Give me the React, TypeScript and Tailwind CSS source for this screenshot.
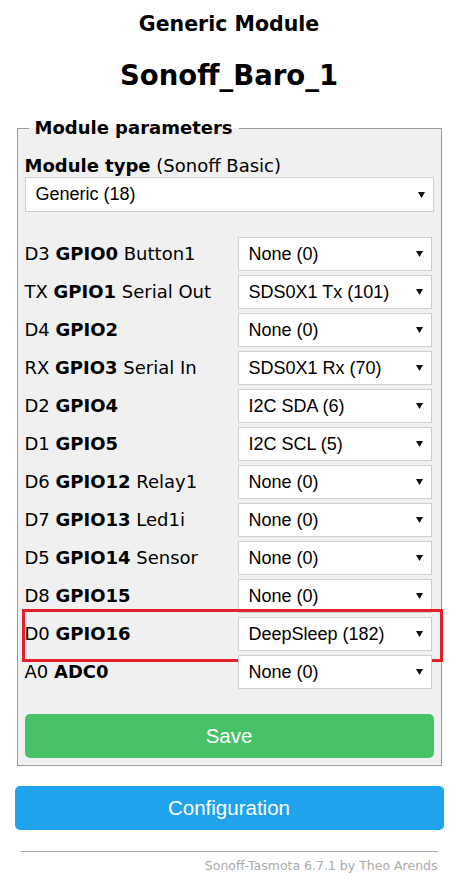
import React from 'react'

// --- GPIO rows as shown on the Tasmota module page ---
const rows = [
  { pin: 'D3', gpio: 'GPIO0', note: 'Button1', value: 'None (0)' },
  { pin: 'TX', gpio: 'GPIO1', note: 'Serial Out', value: 'SDS0X1 Tx (101)' },
  { pin: 'D4', gpio: 'GPIO2', note: '', value: 'None (0)' },
  { pin: 'RX', gpio: 'GPIO3', note: 'Serial In', value: 'SDS0X1 Rx (70)' },
  { pin: 'D2', gpio: 'GPIO4', note: '', value: 'I2C SDA (6)' },
  { pin: 'D1', gpio: 'GPIO5', note: '', value: 'I2C SCL (5)' },
  { pin: 'D6', gpio: 'GPIO12', note: 'Relay1', value: 'None (0)' },
  { pin: 'D7', gpio: 'GPIO13', note: 'Led1i', value: 'None (0)' },
  { pin: 'D5', gpio: 'GPIO14', note: 'Sensor', value: 'None (0)' },
  { pin: 'D8', gpio: 'GPIO15', note: '', value: 'None (0)' },
  { pin: 'D0', gpio: 'GPIO16', note: '', value: 'DeepSleep (182)', marked: true },
  { pin: 'A0', gpio: 'ADC0', note: '', value: 'None (0)' },
]

function Caret() {
  return (
    <svg width="7" height="6" viewBox="0 0 7 6" className="shrink-0">
      <path d="M0 0 H7 L3.5 6 Z" fill="#111" />
    </svg>
  )
}

function FakeSelect({ value, className = '' }: { value: string; className?: string }) {
  return (
    <div
      className={`flex items-center justify-between h-[34px] bg-white border border-[#cfcfcf] pl-[10px] pr-[8px] font-['Liberation_Sans',Arial,sans-serif] text-[18px] text-black ${className}`}
    >
      <span>{value}</span>
      <Caret />
    </div>
  )
}

export default function App() {
  return (
    <div className="min-h-[886px] bg-white text-black font-['DejaVu_Sans',Verdana,sans-serif]">
      <div className="mx-auto w-[429px] pt-[12px]">
        <h3 className="text-center font-bold text-[20.5px] leading-[24px]">Generic Module</h3>
        <h2 className="text-center font-bold text-[27.5px] leading-[32px] mt-[23px]">Sonoff_Baro_1</h2>

        <fieldset className="mt-[26px] mx-[2px] border border-[#9a9a9a] bg-[#f0f0f0] px-[7px] pb-[7px]">
          <legend className="ml-[4px] px-[6px] font-bold text-[18px] leading-[22px]">Module parameters</legend>

          <p className="text-[18px] leading-[22px] mt-[16px]">
            <b>Module type</b> (Sonoff Basic)
          </p>
          <FakeSelect value="Generic (18)" className="mt-[0px] h-[35px]" />

          <div className="mt-[25px] flex flex-col gap-[4px]">
            {rows.map((r) => (
              <div key={r.gpio} className="relative flex items-center">
                <div className="flex-1 text-[18px] leading-[22px] whitespace-nowrap">
                  {r.pin} <b>{r.gpio}</b>
                  {r.note && ` ${r.note}`}
                </div>
                <FakeSelect value={r.value} className="w-[194px] mr-[2px]" />
                {r.marked && (
                  <div className="absolute top-[-8px] bottom-[-11px] left-[-3px] right-[-9px] border-[3px] border-[#e3202b] pointer-events-none" />
                )}
              </div>
            ))}
          </div>

          <button className="mt-[25px] w-full h-[44px] rounded-[5px] bg-[#47c266] text-white text-[20.5px] font-['Liberation_Sans',Arial,sans-serif]">
            Save
          </button>
        </fieldset>

        <button className="mt-[20px] w-full h-[44px] rounded-[5px] bg-[#1fa3ec] text-white text-[20.5px] font-['Liberation_Sans',Arial,sans-serif]">
          Configuration
        </button>

        <div className="mt-[21px] mx-[6px] border-t border-[#aaa]" />
        <div className="mx-[6px] mt-[6px] text-right text-[12.5px] text-[#aaa] leading-[16px]">
          Sonoff-Tasmota 6.7.1 by Theo Arends
        </div>
      </div>
    </div>
  )
}
